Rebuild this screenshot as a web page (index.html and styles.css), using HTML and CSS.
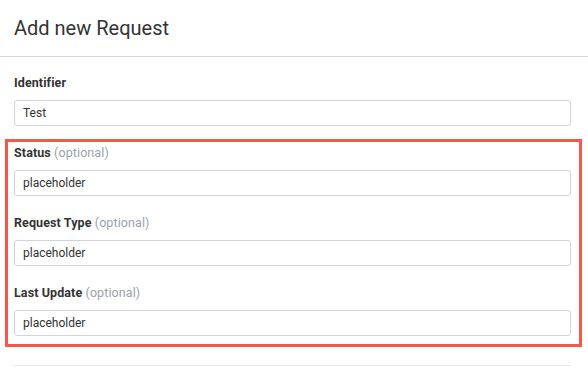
FILE: index.html
```html
<!DOCTYPE html>
<html lang="en">
<head>
    <meta charset="UTF-8">
    <title>Add new Request</title>
    <link rel="stylesheet" href="styles.css">
</head>
<body>
    <div class="modal-header">
        <h2>Add new Request</h2>
    </div>

    <form class="request-form">
        <div class="form-group">
            <label for="identifier">Identifier</label>
            <input type="text" id="identifier" name="identifier" value="Test">
        </div>

        <div class="highlight-group">
            <div class="form-group">
                <label for="status">Status <span class="optional">(optional)</span></label>
                <input type="text" id="status" name="status" value="placeholder">
            </div>

            <div class="form-group">
                <label for="requestType">Request Type <span class="optional">(optional)</span></label>
                <input type="text" id="requestType" name="requestType" value="placeholder">
            </div>

            <div class="form-group">
                <label for="lastUpdate">Last Update <span class="optional">(optional)</span></label>
                <input type="text" id="lastUpdate" name="lastUpdate" value="placeholder">
            </div>
        </div>

        <div class="form-footer"></div>
    </form>
</body>
</html>
```

FILE: styles.css
```css
body {
    margin: 0;
    font-family: Roboto, 'Liberation Sans', sans-serif;
    color: #333;
    background-color: white;
}
.modal-header {
    height: 56px;
    padding: 0 14px;
    border-bottom: 1px solid #d4d6db;
    display: flex;
    align-items: center;
}
.modal-header h2 {
    margin: 0;
    font-size: 20px;
    font-weight: normal;
    color: #333;
}
.request-form {
    padding: 18px 17px 0 14px;
}
.form-group {
    margin-bottom: 19px;
}
label {
    display: block;
    font-size: 12.5px;
    line-height: 16px;
    font-weight: bold;
    letter-spacing: 0.1px;
    color: #333;
    margin-bottom: 9px;
}
.optional {
    font-weight: normal;
    color: #9aa1ad;
}
input[type="text"] {
    display: block;
    width: 100%;
    height: 26px;
    box-sizing: border-box;
    padding: 0 8px;
    border: 1px solid #d1d4da;
    border-radius: 3px;
    font-family: inherit;
    font-size: 12px;
    color: #333;
    background-color: white;
}
.highlight-group {
    margin: -6px -11px 18px -9px;
    padding: 3px 8px 8px 6px;
    border: 3px solid #f5574b;
}
.highlight-group .form-group:last-child {
    margin-bottom: 0;
}
.form-footer {
    border-top: 1px solid #e8e9ec;
}
```
